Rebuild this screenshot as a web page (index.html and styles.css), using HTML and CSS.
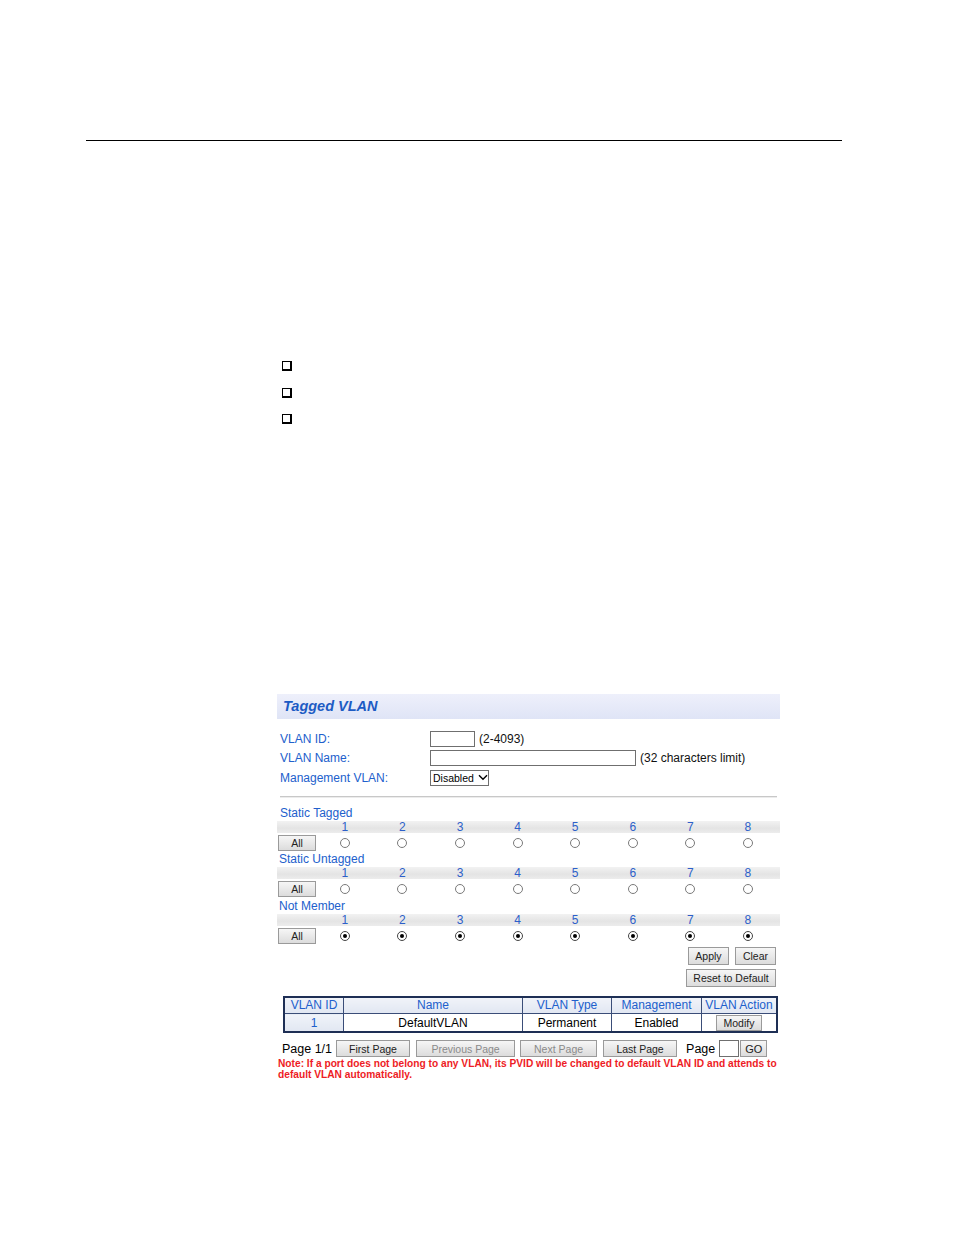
FILE: index.html
```html
<!DOCTYPE html>
<html>
<head>
<meta charset="utf-8">
<link rel="stylesheet" href="styles.css">
</head>
<body>
<div class="page">
  <div class="rule"></div>
  <ul class="bullets">
    <li><span class="box"></span></li>
    <li><span class="box"></span></li>
    <li><span class="box"></span></li>
  </ul>

  <div class="panel">
    <div class="panel-head">Tagged VLAN</div>
    <div class="form">
      <div class="frow"><span class="flabel">VLAN ID:</span><span class="inp inp-id"></span><span class="hint">(2-4093)</span></div>
      <div class="frow"><span class="flabel">VLAN Name:</span><span class="inp inp-name"></span><span class="hint">(32 characters limit)</span></div>
      <div class="frow"><span class="flabel">Management VLAN:</span><span class="sel">Disabled <svg width="10" height="7" viewBox="0 0 10 7"><path d="M1 1.2 L5 5.2 L9 1.2" fill="none" stroke="#000" stroke-width="1.4"/></svg></span></div>
    </div>
    <div class="hr"></div>

    <div class="section first">
      <div class="slabel">Static Tagged</div>
      <div class="ports nums"><span></span><span>1</span><span>2</span><span>3</span><span>4</span><span>5</span><span>6</span><span>7</span><span>8</span></div>
      <div class="ports radios"><span class="btn all">All</span><span><i class="radio"></i></span><span><i class="radio"></i></span><span><i class="radio"></i></span><span><i class="radio"></i></span><span><i class="radio"></i></span><span><i class="radio"></i></span><span><i class="radio"></i></span><span><i class="radio"></i></span></div>
    </div>
    <div class="section">
      <div class="slabel">Static Untagged</div>
      <div class="ports nums"><span></span><span>1</span><span>2</span><span>3</span><span>4</span><span>5</span><span>6</span><span>7</span><span>8</span></div>
      <div class="ports radios"><span class="btn all">All</span><span><i class="radio"></i></span><span><i class="radio"></i></span><span><i class="radio"></i></span><span><i class="radio"></i></span><span><i class="radio"></i></span><span><i class="radio"></i></span><span><i class="radio"></i></span><span><i class="radio"></i></span></div>
    </div>
    <div class="section">
      <div class="slabel">Not Member</div>
      <div class="ports nums"><span></span><span>1</span><span>2</span><span>3</span><span>4</span><span>5</span><span>6</span><span>7</span><span>8</span></div>
      <div class="ports radios"><span class="btn all">All</span><span><i class="radio on"></i></span><span><i class="radio on"></i></span><span><i class="radio on"></i></span><span><i class="radio on"></i></span><span><i class="radio on"></i></span><span><i class="radio on"></i></span><span><i class="radio on"></i></span><span><i class="radio on"></i></span></div>
    </div>

    <div class="actions">
      <div class="arow"><span class="btn b-apply">Apply</span><span class="btn b-clear">Clear</span></div>
      <div class="arow"><span class="btn b-reset">Reset to Default</span></div>
    </div>

    <table class="vtable">
      <tr><th class="c1">VLAN ID</th><th class="c2">Name</th><th class="c3">VLAN Type</th><th class="c4">Management</th><th class="c5">VLAN Action</th></tr>
      <tr><td class="c1 idcell">1</td><td>DefaultVLAN</td><td>Permanent</td><td>Enabled</td><td><span class="btn b-modify">Modify</span></td></tr>
    </table>

    <div class="pager">
      <span class="ptext">Page 1/1</span>
      <span class="btn pb b-first">First Page</span>
      <span class="btn pb b-prev dis">Previous Page</span>
      <span class="btn pb b-next dis">Next Page</span>
      <span class="btn pb b-last">Last Page</span>
      <span class="ptext ptext2">Page</span>
      <span class="inp inp-page"></span>
      <span class="btn pb b-go">GO</span>
    </div>
    <div class="note">Note: If a port does not belong to any VLAN, its PVID will be changed to default VLAN ID and attends to default VLAN automatically.</div>
  </div>
</div>
</body>
</html>
```

FILE: styles.css
```css
html, body {
  margin: 0;
  padding: 0;
  background: #fff;
}
body {
  width: 954px;
  height: 1235px;
  font-family: "Liberation Sans", Arial, sans-serif;
  color: #000;
}
.page {
  padding-top: 140px;
}
.rule {
  margin-left: 86px;
  width: 756px;
  border-top: 1px solid #000;
}
.bullets {
  list-style: none;
  margin: 220px 0 0 0;
  padding: 0 0 0 282px;
}
.bullets li {
  height: 10px;
  margin-bottom: 16.5px;
}
.box {
  display: block;
  width: 7px;
  height: 7px;
  border-top: 1px solid #000;
  border-left: 1px solid #000;
  border-right: 2px solid #000;
  border-bottom: 2px solid #000;
}

.panel {
  margin: 270px 0 0 277px;
  width: 503px;
}
.panel-head {
  height: 25px;
  line-height: 25px;
  background: linear-gradient(to bottom, #eef0fb, #dfe4f6);
  color: #1d5bc4;
  font-weight: bold;
  font-style: italic;
  font-size: 14.5px;
  padding-left: 6px;
}
.form {
  padding-top: 10px;
}
.frow {
  display: flex;
  align-items: center;
  height: 19.5px;
  font-size: 12px;
}
.flabel {
  width: 150px;
  padding-left: 3px;
  color: #2160cc;
}
.inp {
  display: inline-block;
  height: 14px;
  border: 1px solid #6f6f6f;
  background: #fff;
}
.inp-id { width: 43px; }
.inp-name { width: 204px; }
.hint {
  margin-left: 4px;
  color: #111;
}
.sel {
  display: inline-flex;
  align-items: center;
  gap: 4px;
  height: 14px;
  width: 55px;
  padding-left: 2px;
  border: 1px solid #6f6f6f;
  font-size: 10.5px;
  color: #000;
}
.hr {
  margin: 8px 3px 0 3px;
  height: 0;
  border-top: 1px solid #c8c8c8;
  border-bottom: 1px solid #ececec;
}

.section {
  height: 44.5px;
}
.slabel {
  font-size: 12px;
  color: #2160cc;
  height: 15px;
  line-height: 16px;
  padding-left: 2px;
  margin-top: 2px;
}
.section.first .slabel {
  padding-left: 3px;
  margin-top: 7px;
}
.ports {
  display: grid;
  grid-template-columns: 39px repeat(8, 57.6px);
}
.nums {
  height: 12px;
  line-height: 12px;
  margin-top: 1px;
  font-size: 12px;
  color: #2d5fc9;
  background: linear-gradient(to bottom, #f2f2f2, #e4e4e4 60%, #ececec);
}
.nums span {
  text-align: center;
}
.radios {
  height: 16px;
  margin-top: 2px;
  align-items: center;
}
.radios span {
  display: flex;
  justify-content: center;
}
.radio {
  display: block;
  box-sizing: border-box;
  width: 10px;
  height: 10px;
  border-radius: 50%;
  border: 1px solid #7a7a7a;
  background: #fff;
  position: relative;
}
.radio.on {
  border-color: #444;
}
.radio.on::after {
  content: "";
  position: absolute;
  left: 2px;
  top: 2px;
  width: 4px;
  height: 4px;
  border-radius: 50%;
  background: #000;
}

.btn {
  display: inline-flex;
  align-items: center;
  justify-content: center;
  box-sizing: border-box;
  height: 16px;
  border: 1px solid #9a9a9a;
  background: linear-gradient(to bottom, #f6f6f6, #dcdcdc);
  font-size: 10.5px;
  color: #222;
}
.all {
  width: 38px;
  margin-left: 1px;
}
.actions {
  padding-top: 5px;
}
.arow {
  display: flex;
  justify-content: flex-end;
  gap: 6px;
  padding-right: 4px;
  margin-bottom: 4px;
}
.b-apply, .b-clear {
  width: 41px;
  height: 18px;
}
.b-reset {
  width: 90px;
  height: 18px;
}

.vtable {
  margin: 9px 0 0 6px;
  width: 495px;
  border-collapse: collapse;
  border: 2px solid #1e2f55;
  font-size: 12px;
}
.vtable th, .vtable td {
  border: 1px solid #3a4d78;
  text-align: center;
  padding: 0;
}
.vtable th {
  height: 15px;
  line-height: 15px;
  font-weight: normal;
  color: #2160cc;
  background: linear-gradient(to bottom, #f0f3f9, #e1e7f2);
}
.vtable td {
  height: 17px;
  color: #000;
}
.vtable td.idcell {
  color: #2160cc;
  background: linear-gradient(to bottom, #f0f3f9, #e1e7f2);
}
.c1 { width: 58px; }
.c2 { width: 178px; }
.c3 { width: 88px; }
.c4 { width: 89px; }
.b-modify {
  width: 46px;
  height: 16px;
  font-size: 10.5px;
}

.pager {
  display: flex;
  align-items: center;
  margin-top: 7px;
  height: 17px;
}
.ptext {
  font-size: 12.5px;
  margin-left: 5px;
  margin-right: 4px;
}
.ptext2 {
  margin-left: 3px;
  margin-right: 4px;
}
.pb {
  height: 17px;
  margin-right: 6px;
}
.b-first { width: 74px; }
.b-prev { width: 99px; margin-right: 5px; }
.b-next { width: 77px; }
.b-last { width: 74px; }
.dis { color: #8a8a8a; }
.inp-page {
  width: 18px;
  height: 15px;
  margin-right: 1px;
}
.b-go { width: 27px; margin-right: 0; font-size: 11px; }
.note {
  margin-top: 1px;
  font-size: 10.2px;
  font-weight: bold;
  color: #ee1c25;
  line-height: 11px;
  width: 503px;
  padding-left: 1px;
}
```
